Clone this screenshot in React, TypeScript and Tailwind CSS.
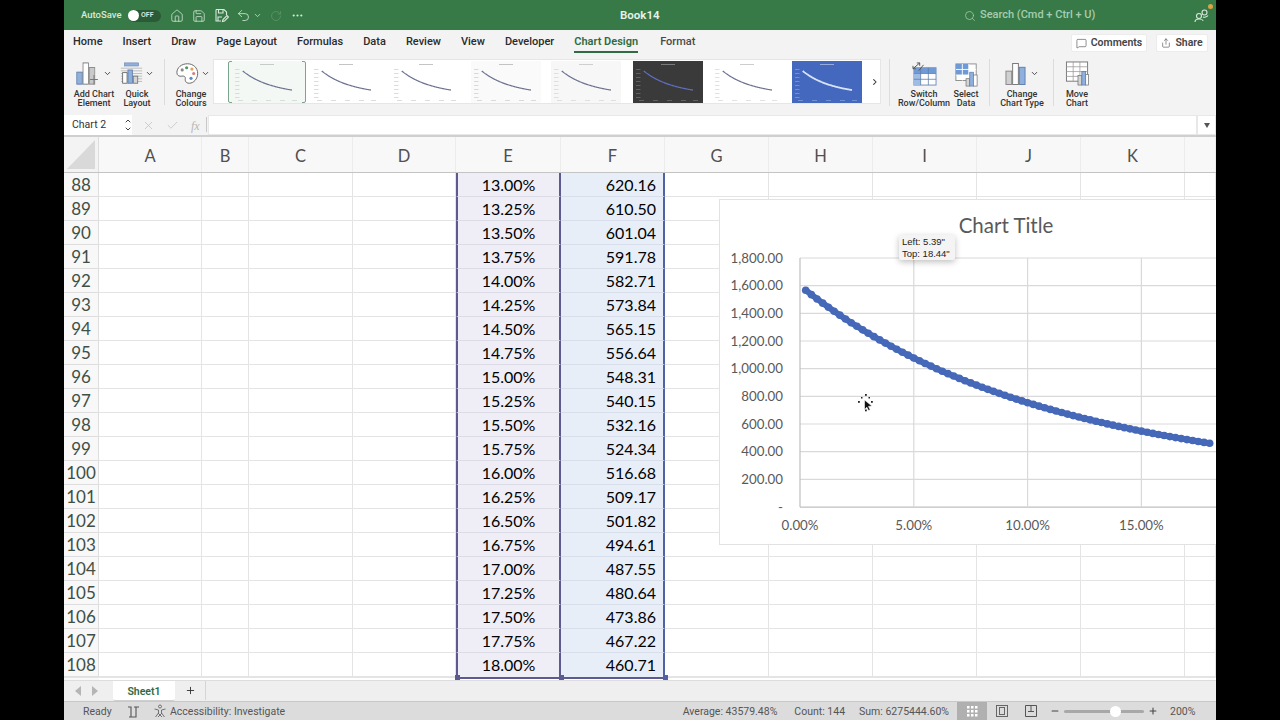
import React from "react";
import { ChevronDown, ChevronRight, ChevronUp, Home, MessageSquare, Minus, MoreHorizontal, Plus, RotateCw, Save, Search, Undo2, X, Check, Share } from "lucide-react";

/* Excel for Mac, Chart Design tab, scrolled to row 88 */

const UI_FONT = "font-['Roboto','Liberation_Sans',sans-serif]";
const SHEET_FONT = "font-['Lato','Open_Sans',sans-serif]";

const columns = [
  { name: "A", w: "w-[103px]" },
  { name: "B", w: "w-[47px]" },
  { name: "C", w: "w-[104px]" },
  { name: "D", w: "w-[103px]" },
  { name: "E", w: "w-[105px]" },
  { name: "F", w: "w-[104px]" },
  { name: "G", w: "w-[104px]" },
  { name: "H", w: "w-[104px]" },
  { name: "I", w: "w-[104px]" },
  { name: "J", w: "w-[104px]" },
  { name: "K", w: "w-[104px]" },
  { name: "", w: "w-[31px]" },
];

const rows = [
  [88, "13.00%", "620.16"],
  [89, "13.25%", "610.50"],
  [90, "13.50%", "601.04"],
  [91, "13.75%", "591.78"],
  [92, "14.00%", "582.71"],
  [93, "14.25%", "573.84"],
  [94, "14.50%", "565.15"],
  [95, "14.75%", "556.64"],
  [96, "15.00%", "548.31"],
  [97, "15.25%", "540.15"],
  [98, "15.50%", "532.16"],
  [99, "15.75%", "524.34"],
  [100, "16.00%", "516.68"],
  [101, "16.25%", "509.17"],
  [102, "16.50%", "501.82"],
  [103, "16.75%", "494.61"],
  [104, "17.00%", "487.55"],
  [105, "17.25%", "480.64"],
  [106, "17.50%", "473.86"],
  [107, "17.75%", "467.22"],
  [108, "18.00%", "460.71"],
];

const tabs = ["Home", "Insert", "Draw", "Page Layout", "Formulas", "Data", "Review", "View", "Developer"];

// the plotted series is a 10 year bond: 60 coupon, 1000 face
function bondPrice(rate: number) {
  const annuity = (1 - Math.pow(1 + rate, -10)) / rate;
  return 60 * annuity + 1000 * Math.pow(1 + rate, -10);
}

const seriesRates = Array.from({ length: 72 }, (_, i) => (i + 1) * 0.0025);

function MiniChart({ bg, line, tick, thick }: { bg: string; line: string; tick: string; thick?: boolean }) {
  const pts = seriesRates
    .map((r) => `${10 + (r / 0.18) * 50},${37 - (bondPrice(r) / 1800) * 31}`)
    .join(" ");
  return (
    <svg width="70" height="42" viewBox="0 0 70 42" className={`${bg} shrink-0`}>
      <rect x="28" y="3" width="14" height="1" fill={tick} opacity="0.8" />
      {[8, 12, 16, 20, 24, 28, 32, 36].map((y) => (
        <rect key={y} x="3" y={y} width="4.500" height="0.800" fill={tick} opacity="0.6" />
      ))}
      {[6, 20, 34, 48, 60].map((x) => (
        <rect key={x} x={x} y="39" width="5" height="0.800" fill={tick} opacity="0.6" />
      ))}
      <polyline points={pts} fill="none" stroke={line} strokeWidth={thick ? 1.8 : 1.2} />
    </svg>
  );
}

function RibbonButton({ label, icon, width, chevron }: { label: string[]; icon: React.ReactNode; width: string; chevron?: boolean }) {
  return (
    <div className={`flex flex-col items-center ${width}`}>
      <div className={`h-[27px] flex items-center ${chevron ? "gap-[2px]" : ""}`}>
        {icon}
        {chevron && <ChevronDown size={9} strokeWidth={2.500} className="text-[#444]" />}
      </div>
      <div className="mt-[3px] text-[9px] leading-[9px] font-medium text-[#333] text-center whitespace-nowrap">
        {label.map((l) => (
          <div key={l}>{l}</div>
        ))}
      </div>
    </div>
  );
}

function AddChartIcon() {
  return (
    <svg width="25" height="24" viewBox="0 0 32 26" preserveAspectRatio="none">
      <rect x="1" y="11" width="7" height="13" fill="#8fb0dc" stroke="#5f7fae" />
      <rect x="9" y="1" width="7" height="23" fill="#fff" stroke="#777" />
      <rect x="17" y="6" width="7" height="18" fill="#c9c9c9" stroke="#888" />
      <path d="M18 19h10M23 14v10" stroke="#777" strokeWidth="1.200" />
    </svg>
  );
}

function QuickLayoutIcon() {
  return (
    <svg width="23" height="23" viewBox="0 0 26 26">
      <rect x="5" y="1" width="16" height="3.500" fill="#8fb0dc" stroke="#6a88b5" strokeWidth="0.700" />
      <path d="M1 7h24M1 10h24M1 13h24M1 16h24M1 19h24M1 22h24" stroke="#a8a8a8" strokeWidth="0.800" />
      <rect x="3" y="12" width="5" height="12" fill="#fff" stroke="#666" />
      <rect x="9" y="9" width="5" height="15" fill="#8fb0dc" stroke="#5f7fae" />
      <rect x="15" y="16" width="5" height="8" fill="#d5d5d5" stroke="#777" />
    </svg>
  );
}

function PaletteIcon() {
  return (
    <svg width="23" height="23" viewBox="0 0 26 26" className="ml-[4px]">
      <path
        d="M13 2C6 2 1 6.500 1 12c0 3.500 3 4.500 5.500 4 2.500-.5 4.500.5 4 3-.4 2 .5 5 4.500 5 5 0 9.500-5 9.500-11C24.500 6.500 19.500 2 13 2z"
        fill="#fff"
        stroke="#666"
        strokeWidth="1.100"
      />
      <circle cx="7" cy="9" r="1.800" fill="#8a8a8a" />
      <circle cx="12" cy="6.500" r="1.800" fill="#4f9a5f" />
      <circle cx="18" cy="8" r="1.800" fill="#e8a15a" />
      <circle cx="20" cy="13" r="1.800" fill="#d87d7d" />
      <circle cx="17" cy="18.500" r="1.800" fill="#5f86c9" />
    </svg>
  );
}

function SwitchIcon() {
  return (
    <svg width="25" height="26" viewBox="0 0 26 27">
      <rect x="2" y="7" width="23" height="18" fill="#fff" stroke="#6f8fbd" />
      <rect x="2" y="7" width="23" height="6" fill="#6f9ad6" />
      <rect x="2" y="13" width="7" height="12" fill="#9dbce6" />
      <path d="M9 7v18M17 7v18M2 13h23M2 19h23" stroke="#5d7ca8" strokeWidth="0.800" />
      <path d="M1 8 8 2M8 2H5M8 2v3M1 8h3M1 8V5M7 10l5-6" stroke="#555" strokeWidth="1" fill="none" />
    </svg>
  );
}

function SelectDataIcon() {
  return (
    <svg width="25" height="24" viewBox="0 0 25 26" className="mt-[3px]">
      <rect x="1" y="1" width="22" height="18" fill="#fff" stroke="#8a8a8a" />
      <rect x="1" y="1" width="14" height="12" fill="#6f9ad6" />
      <path d="M8 1v18M15 1v12M1 7h22M1 13h14" stroke="#fff" strokeWidth="1" />
      <rect x="12" y="17" width="4" height="8" fill="#d5d5d5" stroke="#777" strokeWidth="0.800" />
      <rect x="16" y="10" width="4" height="15" fill="#8fb0dc" stroke="#5f7fae" strokeWidth="0.800" />
      <rect x="20" y="13" width="4" height="12" fill="#fff" stroke="#777" strokeWidth="0.800" />
    </svg>
  );
}

function ChartTypeIcon() {
  return (
    <svg width="21" height="24" viewBox="0 0 22 24">
      <rect x="1" y="9" width="6" height="14" fill="#d0d0d0" stroke="#888" />
      <rect x="8" y="1" width="6" height="22" fill="#fff" stroke="#777" />
      <rect x="15" y="5" width="6" height="18" fill="#8fb0dc" stroke="#5f7fae" />
    </svg>
  );
}

function MoveChartIcon() {
  return (
    <svg width="25" height="25" viewBox="0 0 25 26">
      <rect x="1" y="1" width="22" height="20" fill="#fff" stroke="#777" />
      <path d="M1 6h22M1 11h22M1 16h22M8 1v20M15 1v20" stroke="#999" strokeWidth="0.800" />
      <rect x="13" y="15" width="4" height="10" fill="#d5d5d5" stroke="#777" strokeWidth="0.800" />
      <rect x="17" y="11" width="4" height="14" fill="#8fb0dc" stroke="#5f7fae" strokeWidth="0.800" />
      <rect x="21" y="14" width="3" height="11" fill="#fff" stroke="#777" strokeWidth="0.800" />
    </svg>
  );
}

function SaveAsIcon() {
  return (
    <svg width="15" height="15" viewBox="0 0 15 15" fill="none" stroke="#d8e8db" strokeWidth="1.100">
      <path d="M2 1.500h8l2.500 2.500v3M2 1.500v11.500h5" />
      <path d="M4.500 1.500v3.500h4.500v-3.500M4 13v-4h4" />
      <path d="M8.500 13.500l.5-2 4-4 1.500 1.500-4 4z" />
    </svg>
  );
}

function CollabIcon() {
  return (
    <svg width="15" height="15" viewBox="0 0 15 15" fill="none" stroke="#d8e8db" strokeWidth="1.100">
      <circle cx="5" cy="8" r="2.500" />
      <path d="M1 14c0-2 2-3 4-3s4 1 4 2" />
      <circle cx="10.500" cy="4.500" r="2.500" />
      <path d="M9 9c1 .5 4 0 5-1.500" />
    </svg>
  );
}

function MoveCursor() {
  return (
    <svg width="16" height="18" viewBox="0 0 16 18" className="absolute left-[794px] top-[394px]">
      <g fill="#222">
        <rect x="7" y="0" width="1.800" height="1.800" />
        <rect x="0" y="7" width="1.800" height="1.800" />
        <rect x="13" y="7" width="1.800" height="1.800" />
        <rect x="7" y="15.500" width="1.800" height="1.800" />
        <rect x="3" y="3" width="1.500" height="1.500" />
        <rect x="10.500" y="3" width="1.500" height="1.500" />
      </g>
      <path d="M6.500 6l7.500 6-3.500.4 1.700 3.400-1.700.8-1.700-3.400-2.300 2.500z" fill="#111" stroke="#fff" strokeWidth="0.600" />
    </svg>
  );
}

function ChartObject() {
  const left = 80;
  const top = 58;
  const stepY = 27.67;
  const stepX = 113.8;
  const bottom = top + 9 * stepY;
  const toX = (rate: number) => left + (rate / 0.05) * stepX;
  const toY = (value: number) => bottom - (value / 200) * stepY;
  const yLabels = ["1,800.00", "1,600.00", "1,400.00", "1,200.00", "1,000.00", "800.00", "600.00", "400.00", "200.00", "-"];
  const xLabels = ["0.00%", "5.00%", "10.00%", "15.00%"];
  const curve = seriesRates.map((r) => `${toX(r)},${toY(bondPrice(r))}`).join(" ");
  return (
    <svg width="497" height="346" viewBox="0 0 497 346" className="block">
      <text x="286" y="33" textAnchor="middle" fontSize="20.500" fill="#595959" fontFamily="Lato, sans-serif">
        Chart Title
      </text>
      {yLabels.map((_, i) => (
        <line key={i} x1={left} x2="497" y1={top + i * stepY} y2={top + i * stepY} stroke={i === 9 ? "#bfbfbf" : "#d9d9d9"} strokeWidth="1.200" />
      ))}
      {[0, 1, 2, 3].map((i) => (
        <line key={i} x1={left + i * stepX} x2={left + i * stepX} y1={top} y2={bottom} stroke={i === 0 ? "#bfbfbf" : "#d9d9d9"} strokeWidth="1.200" />
      ))}
      {yLabels.map((l, i) => (
        <text key={l} x="63" y={top + i * stepY + 4.500} textAnchor="end" fontSize="13.300" fill="#595959" fontFamily="Lato, sans-serif">
          {l}
        </text>
      ))}
      {xLabels.map((l, i) => (
        <text key={l} x={left + i * stepX} y="330" textAnchor="middle" fontSize="13.300" fill="#595959" fontFamily="Lato, sans-serif">
          {l}
        </text>
      ))}
      <polyline points={curve} fill="none" stroke="#4668b8" strokeWidth="6" />
      {seriesRates.map((r) => (
        <circle key={r} cx={toX(r)} cy={toY(bondPrice(r))} r="3.800" fill="#4668b8" />
      ))}
    </svg>
  );
}

export default function App() {
  return (
    <div className={`w-full h-[720px] bg-black flex justify-center ${UI_FONT}`}>
      <div className="w-[1152px] h-full flex flex-col overflow-hidden relative bg-white">
        {/* title bar */}
        <div className="h-[30px] bg-[#387a47] flex items-center pt-[1px] pl-[17px] pr-[7px] text-[#d8e8db] shrink-0">
          <span className="w-[40px] text-[9.500px] font-medium whitespace-nowrap">AutoSave</span>
          <div className="ml-[7px] w-[33px] h-[12px] rounded-full bg-[#2b5a37] flex items-center">
            <div className="w-[11px] h-[11px] rounded-full bg-white" />
            <span className="ml-[2px] text-[7px] font-semibold text-[#d8e8db]">OFF</span>
          </div>
          <Home size={14} strokeWidth={1.300} className="ml-[9px]" />
          <Save size={14} strokeWidth={1.300} className="ml-[8px]" />
          <div className="ml-[8px]">
            <SaveAsIcon />
          </div>
          <Undo2 size={15} strokeWidth={1.300} className="ml-[7px]" />
          <ChevronDown size={9} strokeWidth={2} className="ml-[2px]" />
          <RotateCw size={12} strokeWidth={1.200} className="ml-[8px] text-[#6a9a76]" />
          <MoreHorizontal size={13} className="ml-[9px]" />
          <span className="absolute left-[556px] text-[11.500px] font-semibold text-[#e8f2ea]">Book14</span>
          <Search size={12} strokeWidth={1.500} className="absolute left-[900px] text-[#a6cdb0]" />
          <span className="absolute left-[916px] text-[11px] font-medium text-[#a6cdb0]">Search (Cmd + Ctrl + U)</span>
          <div className="ml-auto relative">
            <CollabIcon />
            <span className="absolute -right-[4px] -top-[4px] w-[5px] h-[5px] rounded-full bg-[#d9a441]" />
          </div>
        </div>

        {/* tabs */}
        <div className="h-[26px] bg-[#f3f3f3] flex items-center pl-[9px] pr-[8px] text-[11px] text-[#2b2b2b] font-medium shrink-0">
          <div className="flex gap-[20px] items-center -mt-[1px]">
            {tabs.map((t) => (
              <span key={t}>{t}</span>
            ))}
            <span className="relative font-semibold text-[#2f6b44]">
              Chart Design
              <span className="absolute left-0 right-0 -bottom-[2px] h-[2px] bg-[#2f6b44]" />
            </span>
            <span className="ml-[2px] text-[#4a4a4a]">Format</span>
          </div>
          <div className="ml-auto flex gap-[9px] items-center">
            <div className="h-[18px] w-[76px] bg-white rounded-[2px] border border-[#ececec] flex items-center justify-center gap-[4px] text-[10.500px] font-semibold text-[#444]">
              <MessageSquare size={11} strokeWidth={1.300} />
              Comments
            </div>
            <div className="h-[18px] w-[52px] bg-white rounded-[2px] border border-[#ececec] flex items-center justify-center gap-[4px] text-[10.500px] font-semibold text-[#444]">
              <Share size={10} strokeWidth={1.400} />
              Share
            </div>
          </div>
        </div>

        {/* ribbon */}
        <div className="h-[57px] bg-[#f3f3f3] flex shrink-0 items-start">
          <div className="flex pt-[4px] pl-[8px]">
            <RibbonButton width="w-[44px]" label={["Add Chart", "Element"]} icon={<AddChartIcon />} chevron />
            <RibbonButton width="w-[42px]" label={["Quick", "Layout"]} icon={<QuickLayoutIcon />} chevron />
          </div>
          <div className="ml-[6px] mt-[3px] h-[46px] w-px bg-[#dcdcdc]" />
          <div className="pt-[4px] ml-[5px]">
            <RibbonButton width="w-[42px]" label={["Change", "Colours"]} icon={<PaletteIcon />} chevron />
          </div>
          <div className="ml-[1px] mt-[3px] h-[45px] w-[668px] bg-white flex items-center border border-[#e6e6e6] relative">
            <div className="ml-[14px] w-[80px] h-[42px] border border-[#7ba58a] rounded-[2px] bg-[#f3f8f5] flex items-center justify-center">
              <MiniChart bg="bg-[#f3f8f5]" line="#6b7390" tick="#b8c0bc" />
            </div>
            <div className="ml-[5px]">
              <MiniChart bg="bg-white" line="#6b7390" tick="#b5b5b5" />
            </div>
            <div className="ml-[10px]">
              <MiniChart bg="bg-white" line="#6b7390" tick="#b5b5b5" />
            </div>
            <div className="ml-[10px]">
              <MiniChart bg="bg-[#fafafa]" line="#6b7390" tick="#b5b5b5" />
            </div>
            <div className="ml-[10px]">
              <MiniChart bg="bg-[#f7f7f7]" line="#6b7390" tick="#c4c4c4" />
            </div>
            <div className="ml-[12px]">
              <MiniChart bg="bg-[#3a3a3a]" line="#5f6fc4" tick="#8c8c8c" />
            </div>
            <div className="ml-[9px]">
              <MiniChart bg="bg-white" line="#6b7390" tick="#c0c0c0" />
            </div>
            <div className="ml-[10px]">
              <MiniChart bg="bg-[#4468bd]" line="#d7e3f7" tick="#a9bde6" thick />
            </div>
            <ChevronRight size={10} strokeWidth={2.500} className="ml-[8px] text-[#333]" />
          </div>
          <div className="ml-[8px] mt-[3px] h-[47px] w-px bg-[#dcdcdc]" />
          <div className="pt-[4px] flex">
            <RibbonButton width="w-[54px] ml-[7px]" label={["Switch", "Row/Column"]} icon={<SwitchIcon />} />
            <RibbonButton width="w-[30px]" label={["Select", "Data"]} icon={<SelectDataIcon />} />
          </div>
          <div className="ml-[8px] mt-[3px] h-[47px] w-px bg-[#dcdcdc]" />
          <div className="pt-[4px] ml-[2px]">
            <div className="flex flex-col items-center w-[60px]">
              <div className="h-[27px] flex items-center gap-[4px]">
                <ChartTypeIcon />
                <ChevronDown size={9} strokeWidth={2.500} className="text-[#444]" />
              </div>
              <div className="mt-[3px] text-[9px] leading-[9px] font-medium text-[#333] text-center whitespace-nowrap">
                <div>Change</div>
                <div>Chart Type</div>
              </div>
            </div>
          </div>
          <div className="ml-[1px] mt-[3px] h-[47px] w-px bg-[#dcdcdc]" />
          <div className="pt-[4px] ml-[6px]">
            <RibbonButton width="w-[34px]" label={["Move", "Chart"]} icon={<MoveChartIcon />} />
          </div>
        </div>

        {/* formula bar */}
        <div className="h-[24px] bg-[#f3f3f3] flex items-start shrink-0 pt-[2px] border-b-2 border-[#cfcfcf]">
          <div className="w-[68px] h-[20px] bg-white flex items-center pl-[8px] pr-[1px] text-[10.500px] text-[#333] relative">
            Chart 2
            <div className="absolute right-0 top-[2px] flex flex-col items-center text-[#444]">
              <ChevronUp size={8} strokeWidth={3} />
              <ChevronDown size={8} strokeWidth={3} />
            </div>
          </div>
          <X size={13} strokeWidth={1.500} className="ml-[10px] mt-[4px] text-[#c4c4c4]" />
          <Check size={13} strokeWidth={1.500} className="ml-[11px] mt-[4px] text-[#c4c4c4]" />
          <span className="ml-[12px] mt-[2px] font-['Liberation_Serif',serif] italic text-[12px] text-[#b5b5b5]">fx</span>
          <div className="ml-[6px] mt-[2px] h-[15px] w-px bg-[#c8c8c8]" />
          <div className="ml-[1px] flex-1 h-[20px] bg-white border border-[#e8e8e8]" />
          <div className="w-[19px] h-[20px] bg-white border border-[#e8e8e8] flex items-center justify-center">
            <span className="w-0 h-0 border-l-[3px] border-r-[3px] border-t-[5px] border-l-transparent border-r-transparent border-t-[#555]" />
          </div>
        </div>

        {/* column headers */}
        <div className={`h-[36px] flex shrink-0 bg-[#f8f8f8] border-b border-[#c4c4c4] ${SHEET_FONT}`}>
          <div className="w-[35px] h-full bg-[#f3f3f3] border-r border-[#dddddd] relative overflow-hidden">
            <div className="absolute inset-[3px] bg-[#d9d9d9] [clip-path:polygon(100%_0,100%_100%,0_100%)]" />
          </div>
          {columns.map((c) => (
            <div key={c.w + c.name} className={`${c.w} shrink-0 flex items-center justify-center pt-[3px] text-[16.500px] text-[#505050] border-r border-[#ececec]`}>
              {c.name}
            </div>
          ))}
        </div>

        {/* sheet */}
        <div className={`h-[507px] shrink-0 overflow-hidden ${SHEET_FONT}`}>
          {rows.map(([n, rate, value], idx) => (
            <div key={n} className="h-[24px] flex">
              <div className="w-[35px] shrink-0 bg-[#f8f8f8] border-r border-b border-[#dedede] flex items-center justify-center text-[17px] text-[#3f4f45]">
                {n}
              </div>
              {columns.map((c) => {
                if (c.name === "E") {
                  return (
                    <div key={c.name} className={`${c.w} shrink-0 bg-[#efedf6] border-l-2 border-r-2 border-l-[#5d5a92] border-r-[#5d5a92] ${idx === 20 ? "border-b-0" : "border-b border-b-[#dcdce6]"} flex items-center justify-center text-[16px] text-black`}>
                      {rate}
                    </div>
                  );
                }
                if (c.name === "F") {
                  return (
                    <div key={c.name} className={`${c.w} shrink-0 bg-[#e8eef8] border-r-2 border-r-[#4f62a3] ${idx === 20 ? "border-b-0" : "border-b border-b-[#d8dfea]"} flex items-center justify-end pr-[7px] text-[16px] text-black`}>
                      {value}
                    </div>
                  );
                }
                return <div key={c.name + c.w} className={`${c.w} shrink-0 border-r border-b border-[#e4e4e4]`} />;
              })}
            </div>
          ))}
          <div className="h-[3px] flex border-t border-[#e4e4e4]">
            <div className="w-[35px] bg-[#f8f8f8]" />
          </div>
        </div>

        {/* sheet tabs */}
        <div className="h-[21px] bg-[#efefef] flex shrink-0 items-start border-t border-[#dddddd]">
          <div className="w-[49px] h-full flex items-center pl-[11px] gap-[11px] text-[#b5b5b5]">
            <span className="w-0 h-0 border-y-[5px] border-r-[6px] border-y-transparent border-r-[#b5b5b5]" />
            <span className="w-0 h-0 border-y-[5px] border-l-[6px] border-y-transparent border-l-[#b5b5b5]" />
          </div>
          <div className="w-[62px] h-[20px] pt-[2px] bg-white border-b border-[#cfcfcf] rounded-b-[2px] flex items-center justify-center text-[10.500px] font-semibold text-[#2f6b44]">
            Sheet1
          </div>
          <div className="w-[31px] h-[19px] border-r border-[#d5d5d5] flex items-center justify-center text-[#333]">
            <Plus size={11} strokeWidth={2} />
          </div>
        </div>

        {/* status bar */}
        <div className="h-[19px] bg-[#dcdcdc] border-t border-[#c8c8c8] flex items-center shrink-0 text-[10.500px] text-[#555]">
          <span className="ml-[19px] w-[27px] pt-[1px]">Ready</span>
          <svg width="13" height="13" viewBox="0 0 13 13" fill="none" stroke="#555" strokeWidth="1.100" className="ml-[17px]">
            <path d="M1 2h3v10M4 12h5V2h3M9 2H7M2 12h2" />
          </svg>
          <svg width="14" height="14" viewBox="0 0 14 14" fill="none" stroke="#666" strokeWidth="0.900" className="ml-[13px]">
            <circle cx="7" cy="2.500" r="1.500" />
            <path d="M1.500 5l4 1v3l-3 4M12.500 5l-4 1v3l3 4M5 13l4-4M9 13L5 9" />
          </svg>
          <span className="ml-[3px] pt-[1px]">Accessibility: Investigate</span>
          <span className="ml-auto pt-[1px]">Average: 43579.48%</span>
          <span className="ml-[17px] pt-[1px]">Count: 144</span>
          <span className="ml-[14px] pt-[1px]">Sum: 6275444.60%</span>
          <div className="ml-[8px] w-[30px] h-full bg-[#b0b0b0] flex items-center justify-center">
            <svg width="11" height="11" viewBox="0 0 11 11" fill="#fff">
              {[0, 4, 8].map((x) =>
                [0, 4, 8].map((y) => <rect key={`${x}-${y}`} x={x} y={y} width="2.500" height="2.500" />)
              )}
            </svg>
          </div>
          <svg width="12" height="12" viewBox="0 0 12 12" fill="none" stroke="#666" className="ml-[9px]">
            <rect x="0.500" y="0.500" width="11" height="11" />
            <rect x="3.500" y="2.500" width="5" height="7" />
          </svg>
          <svg width="12" height="12" viewBox="0 0 12 12" fill="none" stroke="#555" className="ml-[17px]">
            <path d="M0.500 11.500v-11h11v11zM6 .5v6M3 6.500h6" />
          </svg>
          <Minus size={10} strokeWidth={2.500} className="ml-[13px] text-[#444]" />
          <div className="ml-[4px] w-[80px] h-[3px] bg-[#a8a8a8] rounded-full relative">
            <div className="absolute left-[46px] -top-[4px] w-[11px] h-[11px] rounded-full bg-white" />
          </div>
          <Plus size={10} strokeWidth={2.500} className="ml-[4px] text-[#444]" />
          <span className="ml-[12px] w-[27px] mr-[19px] pt-[1px]">200%</span>
        </div>

        {/* floating chart and selection handles */}
        <div className="absolute left-[655px] top-[199px] w-[497px] h-[346px] bg-white border border-[#e2e2e2] border-r-0 overflow-hidden">
          <ChartObject />
        </div>
        <div className="absolute left-[392px] top-[677px] w-[209px] h-[2px] bg-[#5d5a92]" />
        <div className="absolute left-[391px] top-[675px] w-[5px] h-[5px] bg-[#5d5a92]" />
        <div className="absolute left-[495px] top-[675px] w-[5px] h-[5px] bg-[#5d5a92]" />
        <div className="absolute left-[599px] top-[675px] w-[5px] h-[5px] bg-[#4f62a3]" />
        <div className="absolute left-[835px] top-[235px] w-[56px] h-[25px] bg-[#f4f4f4] rounded-[2px] shadow-[0_2px_6px_rgba(0,0,0,0.25)] px-[3px] py-[1px] text-[9.500px] leading-[11.500px] text-[#222] font-['Liberation_Sans',sans-serif] whitespace-nowrap">
          <div>Left: 5.39"</div>
          <div>Top: 18.44"</div>
        </div>
        <MoveCursor />
      </div>
    </div>
  );
}
